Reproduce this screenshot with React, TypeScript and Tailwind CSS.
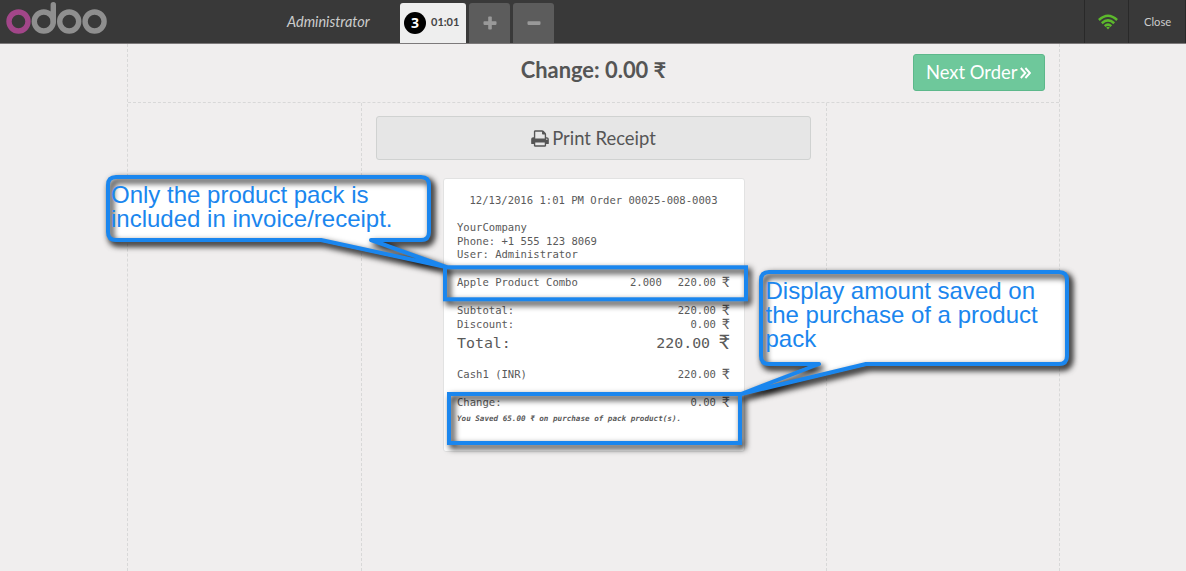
import type { ReactNode } from 'react';

const BLUE = '#1a86ee';

function Logo() {
  return (
    <svg width="104" height="36" viewBox="0 0 104 36" fill="none" strokeWidth="5.4" strokeLinecap="round">
      <circle cx="12.5" cy="21.5" r="9.5" stroke="#a24689" />
      <circle cx="37.8" cy="21.5" r="9.5" stroke="#8f8f8f" />
      <path d="M47.3 21.5V4.8" stroke="#8f8f8f" />
      <circle cx="63.2" cy="21.5" r="9.5" stroke="#8f8f8f" />
      <circle cx="88.6" cy="21.5" r="9.5" stroke="#8f8f8f" />
    </svg>
  );
}

function Wifi() {
  return (
    <svg width="20" height="16" viewBox="0 0 20 16" fill="none" stroke="#5cb82c" strokeWidth="2.5">
      <path d="M0.9 6Q10 -2.4 19.1 6" />
      <path d="M3.8 9.2Q10 3.6 16.2 9.2" />
      <path d="M6.7 12.1Q10 9.2 13.3 12.1" />
      <path d="M8.2 13.6Q10 12 11.8 13.6L10 15.6Z" fill="#5cb82c" stroke="none" />
    </svg>
  );
}

function Printer() {
  return (
    <svg width="18" height="19" viewBox="0 0 1664 1792" fill="#555">
      <path d="M384 1536h896v-256h-896v256zm0-640h896v-384h-160q-40 0-68-28t-28-68v-160h-640v640zm1152 64q0-26-19-45t-45-19-45 19-19 45 19 45 45 19 45-19 19-45zm128 0v416q0 13-9.5 22.5t-22.5 9.5h-224v160q0 40-28 68t-68 28h-960q-40 0-68-28t-28-68v-160h-224q-13 0-22.5-9.5t-9.5-22.5v-416q0-79 56.5-135.5t135.5-56.5h64v-544q0-40 28-68t68-28h672q40 0 88 20t76 48l152 152q28 28 48 76t20 88v256h64q79 0 135.5 56.5t56.5 135.5z" />
    </svg>
  );
}

function TabButton({ children }: { children: ReactNode }) {
  return (
    <div className="flex h-10 w-[41px] items-center justify-center rounded-t-[3px] bg-[#5c5c5c]">
      <svg width="14" height="14" viewBox="0 0 14 14" fill="#999">{children}</svg>
    </div>
  );
}

function Amount({ value }: { value: string }) {
  return (
    <span className="inline-flex items-baseline">
      {value}
      <span className="relative top-px ml-[0.42em] font-['Lato',sans-serif] text-[1.34em] leading-none">₹</span>
    </span>
  );
}

function Row({ label, amount, className }: { label: string; amount: string; className: string }) {
  return (
    <div className={`flex items-baseline justify-between ${className}`}>
      <span>{label}</span>
      <Amount value={amount} />
    </div>
  );
}

function Receipt() {
  return (
    <div className="ml-[81px] mt-[18px] h-[274px] w-[302px] rounded-[3px] border border-[#e2e2e2] bg-white pl-[13px] pr-[14px] pt-[14px] font-['DejaVu_Sans_Mono',monospace] text-[10.57px] leading-[14px] whitespace-pre text-[#5a5a5a]">
      <div className="h-[14px] pl-[12.5px]">12/13/2016 1:01 PM Order 00025-008-0003</div>
      <div className="mt-[14px] leading-[13.6px]">
        <div>YourCompany</div>
        <div>Phone: +1 555 123 8069</div>
        <div>User: Administrator</div>
      </div>
      <div className="mt-[12px] flex h-[14px] items-baseline">
        <span className="w-[173px]">Apple Product Combo</span>
        <span className="flex-1">2.000</span>
        <Amount value="220.00" />
      </div>
      <Row label="Subtotal:" amount="220.00" className="mt-[14px] h-[14px]" />
      <Row label="Discount:" amount="0.00" className="h-[14px]" />
      <Row label="Total:" amount="220.00" className="h-[23px] text-[14.9px] leading-[27px]" />
      <Row label="Cash1 (INR)" amount="220.00" className="mt-[13px] h-[14px]" />
      <Row label="Change:" amount="0.00" className="mt-[14px] h-[14px]" />
      <div className="mt-[4px] text-[7.6px] leading-[13px] font-bold italic">
        You Saved 65.00 ₹ on purchase of pack product(s).
      </div>
    </div>
  );
}

function Annotations() {
  const first =
    'M116 177H421Q429 177 429 185V232Q429 240 421 240H371L446 267L321 240H116Q108 240 108 232V185Q108 177 116 177Z';
  const second =
    'M769 272H1059Q1067 272 1067 280V356Q1067 364 1059 364H866L741 394L819 364H769Q761 364 761 356V280Q761 272 769 272Z';
  return (
    <div className="pointer-events-none absolute inset-0 font-['Liberation_Sans',sans-serif] text-[24px] leading-6 text-[#1a86ee]">
      <svg className="absolute inset-0" width="1186" height="571" viewBox="0 0 1186 571" fill="none">
        <defs>
          <filter id="fill-shade" filterUnits="userSpaceOnUse" x="0" y="0" width="1186" height="571" colorInterpolationFilters="sRGB">
            <feDropShadow dx="3" dy="3.5" stdDeviation="3.2" floodColor="#000" floodOpacity="0.5" />
          </filter>
          <filter id="line-shade" filterUnits="userSpaceOnUse" x="0" y="0" width="1186" height="571" colorInterpolationFilters="sRGB">
            <feDropShadow dx="3" dy="3.5" stdDeviation="3" floodColor="#000" floodOpacity="1" />
          </filter>
        </defs>
        <g fill="#fff" stroke="#fff" strokeWidth="3" filter="url(#fill-shade)">
          <path d={first} />
          <path d={second} />
        </g>
        <g stroke={BLUE} strokeWidth="4" strokeLinejoin="round" filter="url(#line-shade)">
          <path d={first} />
          <path d={second} />
          <rect x="445" y="267.3" width="301" height="32" strokeLinejoin="miter" />
          <rect x="449" y="394" width="291" height="49" strokeLinejoin="miter" />
        </g>
      </svg>
      <div className="absolute left-[111px] top-[183px] whitespace-nowrap">
        Only the product pack is
        <br />
        included in invoice/receipt.
      </div>
      <div className="absolute left-[765.5px] top-[279px] whitespace-nowrap">
        Display amount saved on
        <br />
        the purchase of a product
        <br />
        pack
      </div>
    </div>
  );
}

export default function App() {
  return (
    <div className="relative flex h-[571px] w-[1186px] flex-col overflow-hidden bg-[#f0eeee] font-['Lato',sans-serif] text-[#555]">
      <header className="flex h-[44px] shrink-0 border-b border-[#7c797a] bg-[#393939] text-[#ccc]">
        <div className="w-[281px] pl-[6px]">
          <Logo />
        </div>
        <div className="w-[119px] pl-[6px] text-[14.5px] leading-[44px] italic">Administrator</div>
        <div className="flex items-end gap-[3px]">
          <div className="flex h-10 w-[66px] items-center rounded-t-[3px] bg-[#eee] pl-1 text-[#444]">
            <span className="flex size-[22px] items-center justify-center rounded-full bg-black pb-px font-['Open_Sans',sans-serif] text-[14px] font-bold text-white">
              3
            </span>
            <span className="ml-[5px] pb-[2px] text-[11px] font-bold">01:01</span>
          </div>
          <TabButton>
            <rect x="0.5" y="5.3" width="13" height="3.6" rx="0.8" />
            <rect x="5.2" y="0.6" width="3.6" height="13" rx="0.8" />
          </TabButton>
          <TabButton>
            <rect x="0.5" y="5.3" width="13" height="3.6" rx="0.8" />
          </TabButton>
        </div>
        <div className="ml-auto flex">
          <div className="flex w-11 items-center justify-center border-l border-[#292929] pl-[3px]">
            <Wifi />
          </div>
          <div className="w-[58px] border-x border-[#292929] pl-[15px] text-[11.2px] leading-[43px]">Close</div>
        </div>
      </header>

      <main className="ml-[127px] flex w-[933px] flex-1 flex-col border-x border-dashed border-[#d8d8d8]">
        <div className="relative flex h-[59px] items-start border-b border-dashed border-[#d8d8d8]">
          <div className="w-full pt-[11px] text-center text-[21.9px] leading-[30px] font-bold">Change: 0.00 ₹</div>
          <button className="absolute right-[14px] top-[10px] flex h-[37px] w-[132px] items-center rounded-[3px] border border-[#5db88b] bg-[#6ec89b] pl-3 pt-px text-[18.4px] text-white">
            Next Order
            <svg className="ml-[3px]" width="11" height="12" viewBox="0 0 11 12" fill="none" stroke="#fff" strokeWidth="1.9">
              <path d="M0.8 1L5.3 6L0.8 11M5.4 1L9.9 6L5.4 11" />
            </svg>
          </button>
        </div>
        <div className="flex flex-1">
          <div className="w-[233px]" />
          <section className="w-[466px] border-x border-dashed border-[#d8d8d8]">
            <button className="ml-[14px] mt-[13px] flex h-11 w-[435px] items-center justify-center gap-[3px] rounded-[3px] border border-[#d0d2d1] bg-[#e6e6e6] pt-px text-[18.4px]">
              <Printer />
              Print Receipt
            </button>
            <Receipt />
          </section>
        </div>
      </main>
      <Annotations />
    </div>
  );
}
